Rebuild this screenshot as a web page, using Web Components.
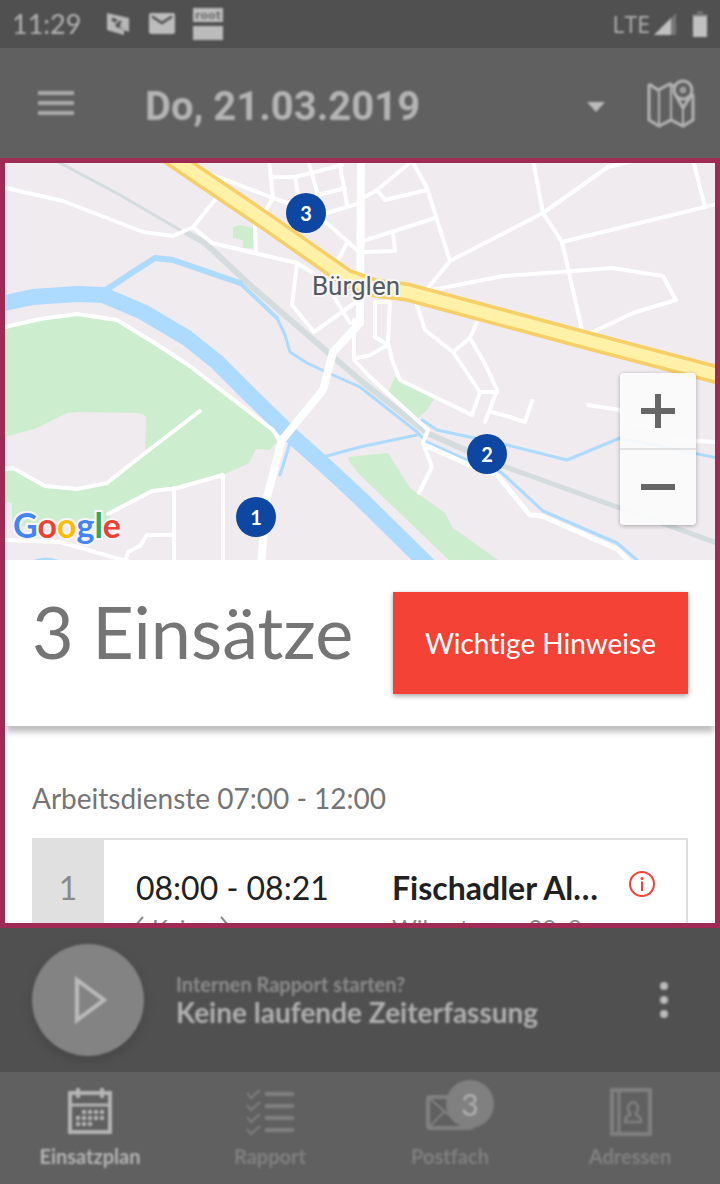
<!DOCTYPE html>
<html lang="de">
<head>
<meta charset="utf-8">
<meta name="viewport" content="width=device-width, initial-scale=1">
<title>Einsatzplan</title>
<style>
  html, body { margin: 0; height: 100%; background: #606060; }
  body { font-family: Lato, "Open Sans", sans-serif; font-variant-ligatures: none; }
</style>
</head>
<body>
<plan-app></plan-app>

<script>
const define = (name, html, setup) => {
  const tpl = document.createElement('template');
  tpl.innerHTML = html;
  customElements.define(name, class extends HTMLElement {
    constructor() {
      super();
      this.attachShadow({ mode: 'open' }).append(tpl.content.cloneNode(true));
    }
    connectedCallback() { if (setup) setup(this, this.shadowRoot); }
  });
};

define('status-bar', `
<style>
  :host { display: block; background: #505050; color: #b4b4b4; }
  .row { display: flex; align-items: center; height: 48px; padding: 0 12px; filter: blur(1px); }
  .time { font-size: 27px; line-height: 32px; margin-right: 24px; }
  .icons { display: flex; align-items: center; gap: 18px; flex: 1; }
  .lte { font: 23px/32px "Open Sans", sans-serif; margin-right: 4px; }
  .signal { margin-right: 14px; }
  svg { display: block; }
</style>
<div class="row">
  <span class="time">11:29</span>
  <div class="icons">
    <svg width="26" height="24" viewBox="0 0 26 24"><path d="M2 1 24 6V20L19 18V23L2 18Z" fill="#b8b8b8"/><path d="M7 7 16 11M11 12 17 17" stroke="#505050" stroke-width="3.500" stroke-dasharray="5 2"/></svg>
    <svg width="26" height="22" viewBox="0 0 26 22"><rect width="26" height="21" rx="2" fill="#bcbcbc"/><path d="M3 3.500 13 10 23 3.500" fill="none" stroke="#505050" stroke-width="2.500"/></svg>
    <svg width="30" height="32" viewBox="0 0 30 32"><path d="M0 0H30V14H0ZM0 18H30V32H0Z" fill="#bcbcbc"/><text x="15" y="11" text-anchor="middle" font-family="DejaVu Sans" font-weight="700" font-size="11" fill="#707070">root</text></svg>
  </div>
  <span class="lte">LTE</span>
  <svg class="signal" width="24" height="22" viewBox="0 0 24 22"><path d="M0 22 22 0V22Z" fill="#777"/><path d="M0 22 17 5V22Z" fill="#c0c0c0"/></svg>
  <svg width="16" height="26" viewBox="0 0 16 26"><path d="M5 0h6v3h5V5H0V3h5Z" fill="#707070"/><path d="M1 5H15V26H1Z" fill="#c0c0c0"/></svg>
</div>`);

define('app-bar', `
<style>
  :host { display: block; background: #606060; color: #b4b4b4; }
  .row { display: flex; align-items: center; height: 110px; padding: 0 24px 0 36px; filter: blur(1px); }
  button { appearance: none; border: 0; padding: 0; background: none; color: inherit; }
  svg { display: block; }
  .date { display: flex; flex: 1; align-items: center; justify-content: space-between; margin: 0 40px 0 69px; padding-top: 8px;
    font: 700 40px/48px Roboto, sans-serif; }
</style>
<div class="row">
  <button aria-label="Menü"><svg width="40" height="28" viewBox="0 0 40 28" fill="none" stroke="#aaa" stroke-width="4"><path d="M2 4H38M2 14H38M2 24H38"/></svg></button>
  <button class="date"><span>Do, 21.03.2019</span><svg width="20" height="12" viewBox="0 0 20 12"><path d="M1 1H19L10 11Z" fill="#bbb"/></svg></button>
  <button aria-label="Karte">
    <svg width="50" height="50" viewBox="0 0 50 50" fill="none" stroke="#b4b4b4" stroke-width="3"><path d="M3 6 12 12 24 6 29 9M3 6V42L13 48 25 42 37 48 47 42V16"/><path d="M13 12V48M25 6V42M37 30V48" stroke-width="2"/><circle cx="37" cy="12" r="9"/><circle cx="37" cy="12" r="2" stroke-width="2"/><path d="M29 16 37 30 46 16"/></svg>
  </button>
</div>`);

define('map-pin', `
<style>
  :host { display: block; position: absolute; width: 40px; height: 40px; margin: -20px 0 0 -20px; }
  button { appearance: none; display: block; width: 100%; height: 100%; padding: 0; border: 0; border-radius: 50%;
    background: #0d47a1; color: #fff; font: 700 20px/40px Lato, sans-serif; text-align: center; }
</style>
<button><slot></slot></button>`, el => {
  el.style.left = 'calc(' + el.getAttribute('x') + ' / 710 * 100%)';
  el.style.top = 'calc(' + el.getAttribute('y') + ' / 397 * 100%)';
});

define('zoom-control', `
<style>
  :host { display: block; position: absolute; right: 19px; bottom: 35px; width: 76px; border-radius: 4px; overflow: hidden;
    background: rgba(251, 251, 251, .92); box-shadow: 0 1px 4px rgba(0, 0, 0, .3); }
  button { appearance: none; display: grid; place-items: center; width: 100%; height: 75px; padding: 0; border: 0; background: none; }
  button + button { border-top: 2px solid #e3e2e3; height: 77px; }
</style>
<button aria-label="Vergrössern"><svg width="34" height="34" viewBox="0 0 34 34"><path d="M0 17H34M17 0V34" stroke="#666" stroke-width="6"/></svg></button>
<button aria-label="Verkleinern"><svg width="34" height="34" viewBox="0 0 34 34"><path d="M0 16H34" stroke="#666" stroke-width="6"/></svg></button>`);

define('job-map', `
<style>
  :host { display: block; position: relative; flex: none; aspect-ratio: 710 / 397; overflow: hidden; background: #efebee; }
  .map { display: block; width: 100%; height: 100%; }
  .logo { position: absolute; left: 8px; bottom: 15px; font: 700 34px/40px Lato, sans-serif; text-decoration: none;
    -webkit-text-stroke: 4px #f7f5f7; paint-order: stroke fill; }
  .b { color: #4285f4; } .r { color: #ea4335; } .y { color: #fbbc05; } .g { color: #34a853; }
</style>
<svg class="map" viewBox="5 163 710 397" preserveAspectRatio="none" fill="none" stroke-linejoin="round" stroke-linecap="round">
  <g fill="#cdeece">
    <path d="M5 327 40 319 77 314 117 320 153 342 187 364 273 430 277 442 270 450 256 449 249 463 223 475 177 488 152 491 110 513V526H12V503L5 502Z"/>
    <path d="M233 227 240 225 253 228V248H243V240L233 238Z"/>
    <path d="M395 377 388 392 418 418 427 410 434 399Z"/>
    <path d="M348 457 388 453 410 488 445 513 453 528 498 560H449L360 475 350 463Z"/>
  </g>
  <path d="M5 437 37 428 67 413 80 412 133 413Q146 413 146 418L145 452 107 483 77 489 45 486 13 468 5 469Z" fill="#efebee"/>
  <g stroke="#d5dcde">
    <path d="M60 163 120 195 180 230 205 243" stroke-width="3"/>
    <path d="M187 233 205 243 250 285 310 337 360 380 427 433 470 452" stroke-width="6"/>
    <path d="M470 452 503 466 620 508 717 543" stroke-width="5"/>
  </g>
  <g stroke="#addaff">
    <path d="M0 304 33 297 77 294 103 295 143 312 187 338 217 362 250 395 293 437 320 461 360 498 423 560 430 567" stroke-width="16"/>
    <path d="M103 292 133 272 155 258 173 260 240 283" stroke-width="6"/>
    <path d="M240 283 277 318" stroke-width="4"/>
    <path d="M277 318 285 335 290 352 307 363 333 375 360 387 417 432 427 442 467 460 493 468 502 473 543 511 617 543 637 560" stroke-width="3"/>
    <path d="M323 457 360 447 417 435M422 420 437 430 507 445 567 460 620 438 717 458M290 443 280 475" stroke-width="3"/>
    <path d="M33 562Q45 556 60 562" stroke-width="3"/>
  </g>
  <g stroke="#fff" stroke-width="4">
    <path d="M5 327 40 319 77 314 117 320 153 342 187 364 273 430 280 441"/>
    <path d="M5 469 13 468 45 486 77 489 107 483 145 453 200 411"/>
    <path d="M108 514 152 491 177 488 223 475V560M174 488V562M174 535H147L140 546 128 552 125 562M5 540 60 542 130 562"/>
    <path d="M6 188 63 201 143 232 173 236 193 227 215 200M193 227 212 243 297 263 313 273 333 295 350 323M255 225 256 252"/>
    <path d="M213 175 273 198 290 204 327 223 357 250M269 160 273 198 263 215M273 177H295L342 165M295 177 298 195M308 160 318 195 345 188M340 165 347 205M327 213 360 203M347 243 337 262M297 263 292 305 314 332 356 302"/>
    <path d="M363 198 377 190 412 161 427 188 450 261 428 288M377 190 385 200 427 190M363 241 435 218M393 233 395 251 363 252"/>
    <path d="M450 261 543 213 608 167 633 161M533 160 543 213 562 242 582 330M562 242 717 204M693 160 705 207"/>
    <path d="M432 290 503 276 560 272 612 268 663 276 676 300 633 313 593 332"/>
    <path d="M417 305 425 330 453 352 480 392 472 415 400 380 392 360 388 342 390 302H375V337L388 345 370 355 357 358"/>
    <path d="M477 322 470 338 453 352M470 338 485 364 497 390 485 422M480 392H497M492 412 510 417 525 422 532 401"/>
    <path d="M354 320V360L370 377 428 430 423 443 432 467 419 493"/>
    <path d="M588 405 620 410 627 423 657 428 677 440 717 442"/>
    <path d="M427 446 467 464 497 475 530 515 542 516 617 549 630 562" stroke-width="5"/>
    <path d="M361 160 360 323 333 352 323 390 282 440 267 497 261 565" stroke-width="8"/>
  </g>
  <path d="M165 153 267 222 347 278 375 288 407 292 593 342 722 376" stroke="#f6cf66" stroke-width="19"/>
  <path d="M165 153 267 222 347 278 375 288 407 292 593 342 722 376" stroke="#fff1a8" stroke-width="12"/>
  <text x="356" y="295" text-anchor="middle" font-family="Roboto, sans-serif" font-size="26" fill="#555a60" stroke="#f8f5f5" stroke-width="4" paint-order="stroke">Bürglen</text>
</svg>
<a class="logo" href="#google"><span class="b">G</span><span class="r">o</span><span class="y">o</span><span class="b">g</span><span class="g">l</span><span class="r">e</span></a>
<map-pin x="251" y="354">1</map-pin>
<map-pin x="482" y="291">2</map-pin>
<map-pin x="301" y="50">3</map-pin>
<zoom-control></zoom-control>`);

define('plan-header', `
<style>
  :host { display: flex; flex: none; position: relative; align-items: center; justify-content: space-between; gap: 24px; padding: 32px 27px;
    background: #fff; box-shadow: 0 7px 6px -1px rgba(0, 0, 0, .26); }
  h1 { margin: 0; font-weight: 400; font-size: 72px; line-height: 76px; padding-bottom: 24px; color: #757575; }
  button { appearance: none; border: 0; padding: 32px; background: #f44336; color: #fff; font: 28px/38px Lato, sans-serif;
    font-variant-ligatures: none; box-shadow: 0 2px 5px rgba(0, 0, 0, .35); white-space: nowrap; }
</style>
<h1><slot></slot></h1>
<button>Wichtige Hinweise</button>`);

define('job-card', `
<style>
  :host { display: flex; border: 2px solid #e0e0e0; border-left: 0; color: #212121; background: #fff; }
  .nr { flex: none; width: 72px; padding-top: 28px; background: #e0e0e0; color: #8a8a8a; font-size: 32px; line-height: 40px; text-align: center; }
  .body { flex: 1; min-width: 0; display: grid; grid-template-columns: 230px minmax(0, 1fr) 26px; column-gap: 26px; row-gap: 4px;
    padding: 28px 31px 28px 32px; font-size: 32px; line-height: 40px; }
  .col { overflow: hidden; white-space: nowrap; text-overflow: ellipsis; }
  .name { font-weight: 700; }
  .sub { font-size: 24px; line-height: 32px; color: #8a8a8a; }
  .status { display: flex; gap: 8px; }
  svg { display: block; margin-top: 3px; }
</style>
<div class="nr"><slot name="nr"></slot></div>
<div class="body">
  <div><slot name="time"></slot></div>
  <div class="col name"><slot name="name"></slot></div>
  <svg width="26" height="26" viewBox="0 0 26 26" role="img" aria-label="Info"><circle cx="13" cy="13" r="12" fill="none" stroke="#f44336" stroke-width="2"/><path d="M13 10.500V20" stroke="#f44336" stroke-width="2"/><circle cx="13" cy="7.500" r="1.500" fill="#f44336"/></svg>
  <div class="sub status">
    <svg width="8" height="20" viewBox="0 0 8 20" fill="none" stroke="#8a8a8a" stroke-width="2"><path d="M7 2 0 10 7 18"/></svg>
    <slot name="status"></slot>
    <svg width="8" height="20" viewBox="0 0 8 20" fill="none" stroke="#8a8a8a" stroke-width="2"><path d="M1 2 8 10 1 18"/></svg>
  </div>
  <div class="col sub"><slot name="address"></slot></div>
</div>`);

define('job-list', `
<style>
  :host { display: block; padding: 52px 27px 24px; background: #fff; }
  h2 { margin: 0 0 20px; font-weight: 400; font-size: 28px; line-height: 40px; color: #757575; }
</style>
<h2>Arbeitsdienste 07:00 - 12:00</h2>
<job-card>
  <span slot="nr">1</span><span slot="time">08:00 - 08:21</span><span slot="name">Fischadler Alexander</span>
  <span slot="status">Keine</span><span slot="address">Wilerstrasse 20, 8575 Bürglen</span>
</job-card>`);

define('time-tracker', `
<style>
  :host { display: block; background: #505050; color: #aaa; }
  .row { display: flex; align-items: center; height: 144px; padding: 0 32px; filter: blur(1px); }
  button { appearance: none; border: 0; padding: 0; background: none; }
  .play { display: grid; place-items: center; width: 112px; height: 112px; border-radius: 50%; background: #838383; box-shadow: 0 4px 12px rgba(0, 0, 0, .15); }
  .text { flex: 1; padding-left: 32px; }
  p { margin: 0; font-weight: 700; }
  .q { font-size: 20px; line-height: 24px; color: #8c8c8c; }
  .s { font-size: 28px; line-height: 32px; color: #b0b0b0; }
  svg { display: block; }
</style>
<div class="row">
  <button class="play" aria-label="Start"><svg width="48" height="48" viewBox="0 0 48 48"><path d="M13 4 40 24 13 44Z" fill="none" stroke="#bbb" stroke-width="4"/></svg></button>
  <div class="text"><p class="q">Internen Rapport starten?</p><p class="s">Keine laufende Zeiterfassung</p></div>
  <button aria-label="Mehr"><svg width="48" height="48" viewBox="0 0 48 48" fill="#bbb"><circle cx="24" cy="10" r="4"/><circle cx="24" cy="24" r="4"/><circle cx="24" cy="38" r="4"/></svg></button>
</div>`);

define('tab-item', `
<style>
  :host { display: block; flex: 1; color: #808080; }
  :host([active]) { color: #b4b4b4; }
  a { display: flex; flex-direction: column; align-items: center; padding: 16px 0; color: inherit; text-decoration: none;
    font-weight: 700; font-size: 20px; line-height: 24px; }
  .icon { position: relative; display: block; width: 50px; height: 48px; margin-bottom: 8px; }
</style>
<a><span class="icon"><slot name="icon"></slot></span><slot></slot></a>`, (el, root) => {
  root.querySelector('a').href = '#' + el.lastChild.textContent.trim().toLowerCase();
});

define('tab-bar', `
<style>
  :host { display: block; background: #606060; }
  nav { display: flex; filter: blur(1px); }
  svg { display: block; width: 50px; height: 48px; fill: none; stroke: currentColor; }
  .badge { position: absolute; left: 21px; top: -8px; width: 48px; height: 48px; border-radius: 50%; background: #808080; color: #b0b0b0;
    font: 30px/48px Lato, sans-serif; text-align: center; }
</style>
<nav>
  <tab-item active><svg slot="icon" viewBox="0 0 50 48"><path d="M5 5H45V44H5Z" stroke-width="4"/><path d="M5 17H45" stroke-width="3"/><path d="M13 0V10M37 0V10" stroke-width="4"/><path d="M17 24H40M11 30H40M11 36H28" stroke-width="4" stroke-dasharray="4 2"/></svg>Einsatzplan</tab-item>
  <tab-item><svg slot="icon" viewBox="0 0 50 48"><path d="M20 6H49M20 18H49M20 30H49M20 42H49" stroke-width="4"/><path d="M2 5 6 10 15 2M2 17 6 22 15 14M2 29 6 34 15 26M2 41 6 46 15 38" stroke-width="2"/></svg>Rapport</tab-item>
  <tab-item><svg slot="icon" viewBox="0 0 50 48"><rect x="3" y="9" width="44" height="31" rx="2" stroke-width="4"/><path d="M4 10 25 28 46 10M4 39 19 24" stroke-width="2"/></svg><span class="badge" slot="icon">3</span>Postfach</tab-item>
  <tab-item><svg slot="icon" viewBox="0 0 50 48"><path d="M7 2H45V46H7Z" stroke-width="4"/><path d="M14 2V46" stroke-width="3"/><path d="M20 34Q20 28 25 27V25A5 6 0 1 1 31 25V27Q36 28 36 34Z" stroke-width="2.500"/></svg>Adressen</tab-item>
</nav>`);

define('plan-app', `
<style>
  :host { display: flex; flex-direction: column; height: 100vh; }
  status-bar, app-bar, time-tracker, tab-bar { flex: none; }
  main { flex: 1; min-height: 0; overflow: hidden; display: flex; flex-direction: column; border: 5px solid #9f2b54; background: #fff; }
  job-list { flex: none; }
</style>
<status-bar></status-bar>
<app-bar></app-bar>
<main>
  <job-map></job-map>
  <plan-header>3 Einsätze</plan-header>
  <job-list></job-list>
</main>
<time-tracker></time-tracker>
<tab-bar></tab-bar>`);
</script>
</body>
</html>
